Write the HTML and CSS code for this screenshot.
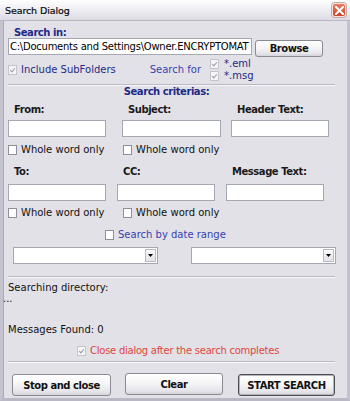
FILE: index.html
```html
<!DOCTYPE html>
<html>
<head>
<meta charset="utf-8">
<link rel="stylesheet" href="styles.css">
</head>
<body>
<div class="window">
  <div class="titlebar">
    <span class="title">Search Dialog</span>
    <span class="close"><svg width="9" height="9" viewBox="0 0 9 9"><path d="M1 1 L8 8 M8 1 L1 8" stroke="#fff" stroke-width="2" stroke-linecap="square"/></svg></span>
  </div>
  <div class="content">
    <div class="section-label">Search in:</div>
    <div class="path-row">
      <div class="textbox path">C:\Documents and Settings\Owner.ENCRYPTOMAT</div>
      <div class="btn browse">Browse</div>
    </div>
    <div class="options-row">
      <div class="check disabled sub"><span class="box checked"></span>Include SubFolders</div>
      <span class="search-for">Search for</span>
      <div class="types">
        <div class="check type"><span class="box checked"></span>*.eml</div>
        <div class="check type"><span class="box checked"></span>*.msg</div>
      </div>
    </div>
    <div class="sep"></div>
    <div class="criteria-title">Search criterias:</div>

    <div class="labels row1">
      <span class="lbl l-from">From:</span>
      <span class="lbl l-subject">Subject:</span>
      <span class="lbl l-header">Header Text:</span>
    </div>
    <div class="inputs row1">
      <div class="textbox field"></div>
      <div class="textbox field"></div>
      <div class="textbox field"></div>
    </div>
    <div class="checks row1">
      <div class="check"><span class="box"></span>Whole word only</div>
      <div class="check"><span class="box"></span>Whole word only</div>
    </div>

    <div class="labels row2">
      <span class="lbl l-to">To:</span>
      <span class="lbl l-cc">CC:</span>
      <span class="lbl l-msg">Message Text:</span>
    </div>
    <div class="inputs row2">
      <div class="textbox field"></div>
      <div class="textbox field"></div>
      <div class="textbox field"></div>
    </div>
    <div class="checks row2">
      <div class="check"><span class="box"></span>Whole word only</div>
      <div class="check"><span class="box"></span>Whole word only</div>
    </div>

    <div class="date-row">
      <div class="check blue"><span class="box"></span>Search by date range</div>
    </div>
    <div class="combos">
      <div class="combo"><span class="arrow"><svg width="5" height="3" viewBox="0 0 5 3"><path d="M0 0 H5 L2.5 3 Z" fill="#000"/></svg></span></div>
      <div class="combo"><span class="arrow"><svg width="5" height="3" viewBox="0 0 5 3"><path d="M0 0 H5 L2.5 3 Z" fill="#000"/></svg></span></div>
    </div>
    <div class="sep sep2"></div>

    <div class="status">Searching directory:</div>
    <div class="dots">...</div>
    <div class="status found">Messages Found: 0</div>

    <div class="close-row">
      <div class="check disabled red"><span class="box checked"></span>Close dialog after the search completes</div>
    </div>
    <div class="sep sep3"></div>

    <div class="buttons">
      <div class="btn big stop">Stop and close</div>
      <div class="btn big clear">Clear</div>
      <div class="btn big start">START SEARCH</div>
    </div>
  </div>
</div>
</body>
</html>
```

FILE: styles.css
```css
* { box-sizing: border-box; }
html, body { margin: 0; padding: 0; background: #e2e1e7; }
body { font-family: "DejaVu Sans", sans-serif; font-size: 10px; color: #111; }

.window {
  width: 350px;
  height: 401px;
  display: flex;
  flex-direction: column;
  background: #e2e1e7;
  border-left: 3px solid #c3c2ce;
  border-right: 3px solid #c3c2ce;
  border-bottom: 3px solid #b9b8c4;
  box-shadow: inset 1px 0 0 #a9a8b6;
}

.titlebar {
  height: 21px;
  margin: 0 -3px;
  display: flex;
  align-items: center;
  justify-content: space-between;
  padding: 0 4px 0 5px;
  background: linear-gradient(#ffffff 0%, #f1f1f5 40%, #dcdbe4 100%);
  border-bottom: 1px solid #b8b7c3;
}
.title { font-size: 9.5px; color: #0a0a0a; letter-spacing: -0.1px; padding-top: 1px; -webkit-text-stroke: 0.2px #0a0a0a; }
.close {
  width: 14px; height: 14px;
  border: 1px solid #f6e3dd;
  border-radius: 3px;
  background: linear-gradient(#e77d63, #c9452a);
  display: flex; align-items: center; justify-content: center;
  box-shadow: 0 0 0 1px #c9a9a2;
}

.content {
  flex: 1;
  display: flex;
  flex-direction: column;
  padding: 0 12px 0 5px;
}

.section-label, .criteria-title, .lbl, .btn {
  font-family: "DejaVu Sans", sans-serif;
  font-weight: bold;
  font-size: 10px;
  letter-spacing: -0.45px;
}
.section-label {
  color: #1e2a86;
  line-height: 11px;
  margin-top: 6px;
  padding-left: 6px;
}

.textbox {
  background: #fff;
  border: 1px solid #a4a8b2;
  height: 17px;
}
.path-row { display: flex; align-items: flex-start; }
.path {
  width: 244px;
  overflow: hidden;
  white-space: nowrap;
  line-height: 15px;
  padding-left: 1px;
  color: #000;
  letter-spacing: -0.25px;
}
.btn {
  display: flex; align-items: center; justify-content: center;
  border: 1px solid #8a8a93;
  border-radius: 3px;
  background: linear-gradient(#ffffff 0%, #f4f4f6 50%, #e4e3e9 85%, #d4d3da 100%);
  color: #111;
}
.browse { width: 68px; height: 17px; margin: 2px 0 0 3px; }

.options-row {
  display: flex;
  align-items: flex-start;
  height: 27px;
}
.check { display: flex; align-items: center; line-height: 13px; height: 13px; white-space: nowrap; color: #111; }
.box {
  width: 9px; height: 10px;
  border: 1px solid #8e8f9b;
  background: #fff;
  margin-right: 4px;
  position: relative;
  flex: none;
}
.box.checked::after {
  content: "";
  position: absolute;
  left: 2px; top: 1px;
  width: 2px; height: 4px;
  border-right: 1.5px solid #9c9ca8;
  border-bottom: 1.5px solid #9c9ca8;
  transform: rotate(40deg);
}
.disabled .box { border-color: #c4c4cc; background: #f5f5f7; }
.sub { color: #1e2a86; margin-top: 6px; }
.search-for { color: #3543b0; margin-left: 34px; margin-top: 6px; line-height: 13px; }
.types { display: flex; flex-direction: column; margin-left: 9px; margin-top: 1px; }
.type { color: #1e2a86; line-height: 12px; height: 12px; }
.type .box { border-color: #c4c4cc; background: #f5f5f7; margin-right: 5px; }

.sep {
  height: 2px;
  border-top: 1px solid #b9b8c3;
  border-bottom: 1px solid #f7f7f9;
}
.criteria-title {
  color: #1e2a86;
  text-align: center;
  line-height: 11px;
  padding-right: 10px;
}

.labels { display: flex; line-height: 14px; color: #111; }
.labels.row1 { margin-top: 6px; }
.labels.row2 { margin-top: 9px; }
.lbl { color: #1a1a1a; }
.l-from { width: 114px; padding-left: 6px; }
.l-subject { width: 115px; padding-left: 6px; }
.l-header { padding-left: 0; }
.l-to { width: 109px; padding-left: 6px; }
.l-cc { width: 109px; padding-left: 6px; }
.l-msg { padding-left: 6px; }

.inputs { display: flex; }
.inputs.row1 { margin-top: 3px; }
.inputs.row2 { margin-top: 5px; }
.field { width: 98px; }
.inputs.row1 .field:nth-child(2) { margin-left: 16px; width: 99px; }
.inputs.row1 .field:nth-child(3) { margin-left: 10px; }
.inputs.row2 .field:nth-child(2) { margin-left: 11px; }
.inputs.row2 .field:nth-child(3) { margin-left: 11px; }

.checks { display: flex; }
.checks.row1 { margin-top: 6px; }
.checks.row2 { margin-top: 5px; }
.checks .check:first-child { width: 115px; }

.date-row { display: flex; margin-top: 9px; padding-left: 97px; }
.blue { color: #3543b0; }

.combos { display: flex; justify-content: space-between; margin-top: 6px; padding-left: 5px; margin-right: -1px; }
.combo {
  width: 145px; height: 17px;
  background: #fff;
  border: 1px solid #a4a8b2;
  display: flex; justify-content: flex-end; align-items: stretch;
  padding: 1px;
}
.arrow {
  width: 11px;
  border: 1px solid #b9bac4;
  background: linear-gradient(#fbfbfc, #e2e2e8);
  display: flex; align-items: center; justify-content: center;
}
.sep2 { margin-top: 12px; }

.status { line-height: 13px; margin-top: 3px; color: #111; }
.dots { line-height: 9px; margin-left: -5px; color: #111; }
.found { margin-top: 20px; }

.close-row { display: flex; margin-top: 8px; padding-left: 69px; }
.red { color: #e0463d; letter-spacing: -0.25px; }
.sep3 { margin-top: 4px; }

.buttons { display: flex; margin-top: 10px; padding-left: 4px; align-items: flex-start; }
.big { height: 22px; }
.stop { width: 99px; margin-top: 1px; }
.clear { width: 98px; margin-left: 14px; }
.start {
  width: 97px;
  margin-left: 15px;
  margin-top: 1px;
  border-color: #4b4b52;
  box-shadow: inset 0 0 0 1px #b5b4bc;
}
```
